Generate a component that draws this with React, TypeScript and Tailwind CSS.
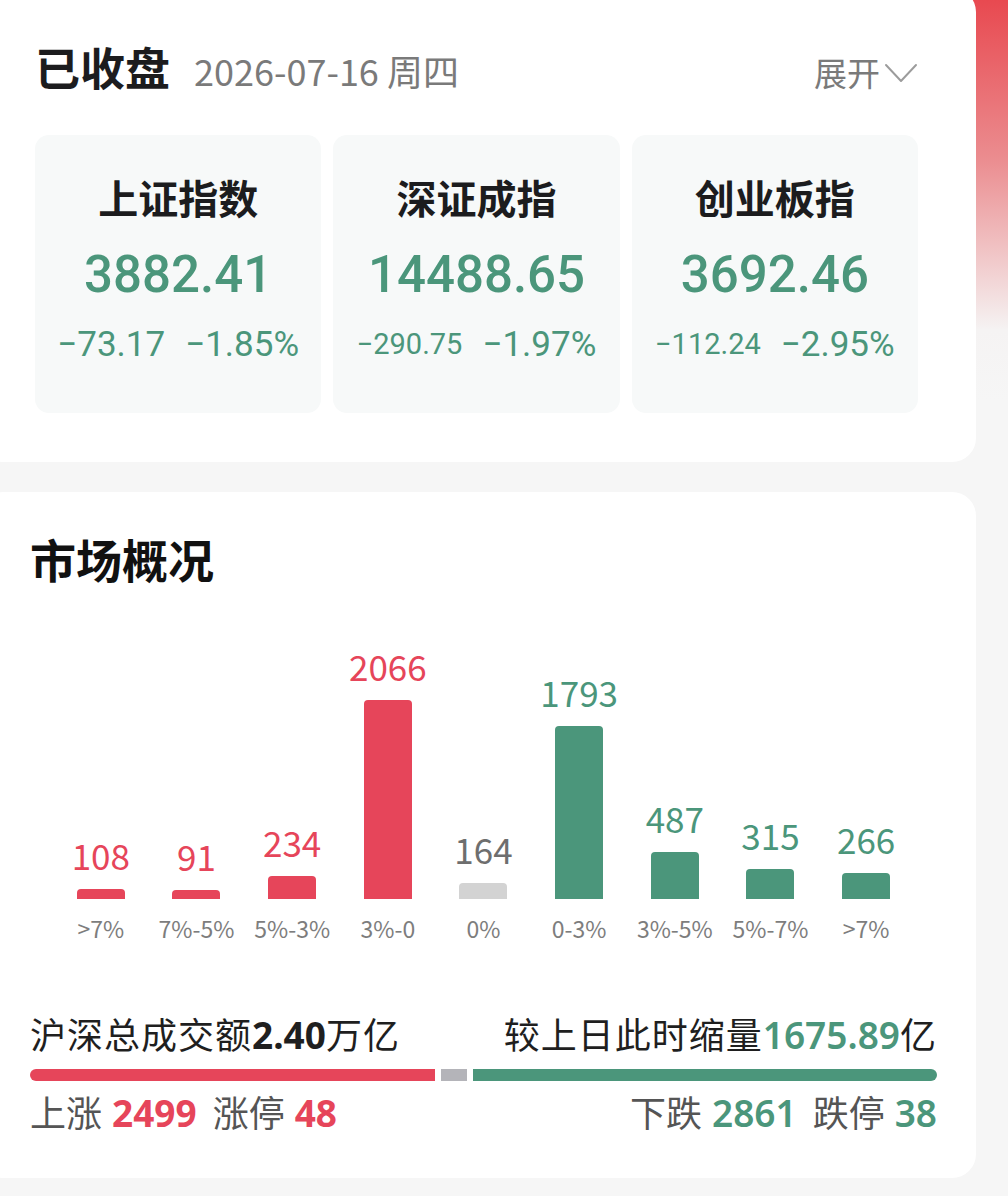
import React from 'react';

// 指数卡片数据
const indices = [
  { name: '上证指数', value: '3882.41', chg: '−73.17', pct: '−1.85%', chgSize: 'text-[35px]' },
  { name: '深证成指', value: '14488.65', chg: '−290.75', pct: '−1.97%', chgSize: 'text-[29px]' },
  { name: '创业板指', value: '3692.46', chg: '−112.24', pct: '−2.95%', chgSize: 'text-[29px]' },
];

type Tone = 'up' | 'flat' | 'down';

// 涨跌分布
const dist: { label: string; count: number; tone: Tone }[] = [
  { label: '>7%', count: 108, tone: 'up' },
  { label: '7%-5%', count: 91, tone: 'up' },
  { label: '5%-3%', count: 234, tone: 'up' },
  { label: '3%-0', count: 2066, tone: 'up' },
  { label: '0%', count: 164, tone: 'flat' },
  { label: '0-3%', count: 1793, tone: 'down' },
  { label: '3%-5%', count: 487, tone: 'down' },
  { label: '5%-7%', count: 315, tone: 'down' },
  { label: '>7%', count: 266, tone: 'down' },
];

const MAX_BAR = 199;
const maxCount = Math.max(...dist.map((d) => d.count));

const barColor: Record<Tone, string> = {
  up: 'bg-[#e6455a]',
  flat: 'bg-[#d3d3d3]',
  down: 'bg-[#4b967b]',
};
const numColor: Record<Tone, string> = {
  up: 'text-[#e6455a]',
  flat: 'text-[#6e6e6e]',
  down: 'text-[#4b967b]',
};

const CJK = "font-['Noto_Sans_CJK_SC',sans-serif]";
const NUM = "font-['Roboto','Noto_Sans_CJK_SC',sans-serif]";
const NUM2 = "font-['Noto_Sans','Noto_Sans_CJK_SC',sans-serif]";

function IndexCard({ item }: { item: (typeof indices)[number] }) {
  return (
    <div className="h-[278px] rounded-[14px] bg-[#f7f9f9] flex flex-col items-center pt-[42px]">
      <div className={`${CJK} text-[40px] leading-none font-bold text-[#1c1c1e]`}>{item.name}</div>
      <div className={`${NUM} mt-[32px] text-[51px] leading-none font-medium text-[#4b967b]`}>{item.value}</div>
      <div className={`${NUM} mt-[27px] flex items-center gap-[20px] text-[#4b967b] leading-none`}>
        <span className={item.chgSize}>{item.chg}</span>
        <span className="text-[35px]">{item.pct}</span>
      </div>
    </div>
  );
}

function Chevron() {
  return (
    <svg width="34" height="20" viewBox="0 0 34 20" className="ml-[4px] self-center">
      <polyline points="2,2 17,18 32,2" fill="none" stroke="#9c9c9c" strokeWidth="2" strokeLinejoin="round" strokeLinecap="round" />
    </svg>
  );
}

export default function App() {
  const up = 2499;
  const flat = 164;
  const down = 2861;

  return (
    <div className="w-[1008px] h-[1196px] overflow-hidden bg-[linear-gradient(to_bottom,#e84950_0px,#eb8d90_160px,#f5f3f3_330px,#f6f6f6_400px)]">
      <div className="ml-[-20px] w-[996px] flex flex-col gap-[30px]">
        {/* 收盘行情 */}
        <section className="mt-[-12px] rounded-[24px] bg-white pl-[55px] pr-[58px] pt-[56px] pb-[49px]">
          <div className="flex items-baseline h-[44px]">
            <span className={`${CJK} text-[45px] leading-none font-bold text-[#1c1c1e]`}>已收盘</span>
            <span className={`${CJK} ml-[24px] text-[36px] leading-none text-[#7a7a7a]`}>2026-07-16 周四</span>
            <span className="ml-auto flex items-baseline">
              <span className={`${CJK} text-[33px] leading-none text-[#7a7a7a]`}>展开</span>
              <Chevron />
            </span>
          </div>
          <div className="mt-[47px] grid grid-cols-3 gap-[12px]">
            {indices.map((it) => (
              <IndexCard key={it.name} item={it} />
            ))}
          </div>
        </section>

        {/* 市场概况 */}
        <section className="rounded-[24px] bg-white pl-[50px] pr-[39px] pt-[43px] pb-[47px]">
          <h2 className={`${CJK} text-[46px] leading-none font-bold text-[#111]`}>市场概况</h2>

          <div className="mt-[67px] mx-[23px] grid grid-cols-9 items-end">
            {dist.map((d, i) => (
              <div key={i} className="flex flex-col items-center">
                <span className={`${CJK} text-[35px] leading-none ${numColor[d.tone]}`}>{d.count}</span>
                <div
                  className={`mt-[17px] w-[48px] rounded-t-[4px] ${barColor[d.tone]}`}
                  style={{ height: Math.round((d.count / maxCount) * MAX_BAR) }}
                />
                <span className={`${CJK} mt-[18px] text-[23px] leading-none text-[#7d7d7d]`}>{d.label}</span>
              </div>
            ))}
          </div>

          <div className="mt-[75px]">
            <div className="flex justify-between items-baseline text-[#1f1f1f] leading-none">
              <span className={`${CJK} text-[36px] tracking-[1px]`}>
                沪深总成交额<span className={`${NUM2} font-bold text-[37px] tracking-normal`}>2.40</span>万亿
              </span>
              <span className={`${CJK} text-[36px] tracking-[1px]`}>
                较上日此时缩量<span className={`${NUM2} font-semibold text-[37px] text-[#4b967b] tracking-normal`}>1675.89</span>亿
              </span>
            </div>

            <div className="mt-[16px] flex gap-[6px] h-[12px]">
              <div className="rounded-l-full bg-[#e6455a]" style={{ flex: `${up} 1 0` }} />
              <div className="bg-[#b4b4b9]" style={{ flex: `${flat} 1 0` }} />
              <div className="rounded-r-full bg-[#4b967b]" style={{ flex: `${down} 1 0` }} />
            </div>

            <div className="mt-[12px] flex justify-between items-baseline leading-none text-[#555]">
              <span className={`${CJK} text-[36px]`}>
                上涨<span className={`${NUM2} ml-[10px] font-bold text-[37px] text-[#e6455a]`}>{up}</span>
                <span className="ml-[16px]">涨停</span>
                <span className={`${NUM2} ml-[10px] font-bold text-[37px] text-[#e6455a]`}>48</span>
              </span>
              <span className={`${CJK} text-[36px]`}>
                下跌<span className={`${NUM2} ml-[10px] font-semibold text-[37px] text-[#4b967b]`}>{down}</span>
                <span className="ml-[16px]">跌停</span>
                <span className={`${NUM2} ml-[10px] font-semibold text-[37px] text-[#4b967b]`}>38</span>
              </span>
            </div>
          </div>
        </section>
      </div>
    </div>
  );
}
